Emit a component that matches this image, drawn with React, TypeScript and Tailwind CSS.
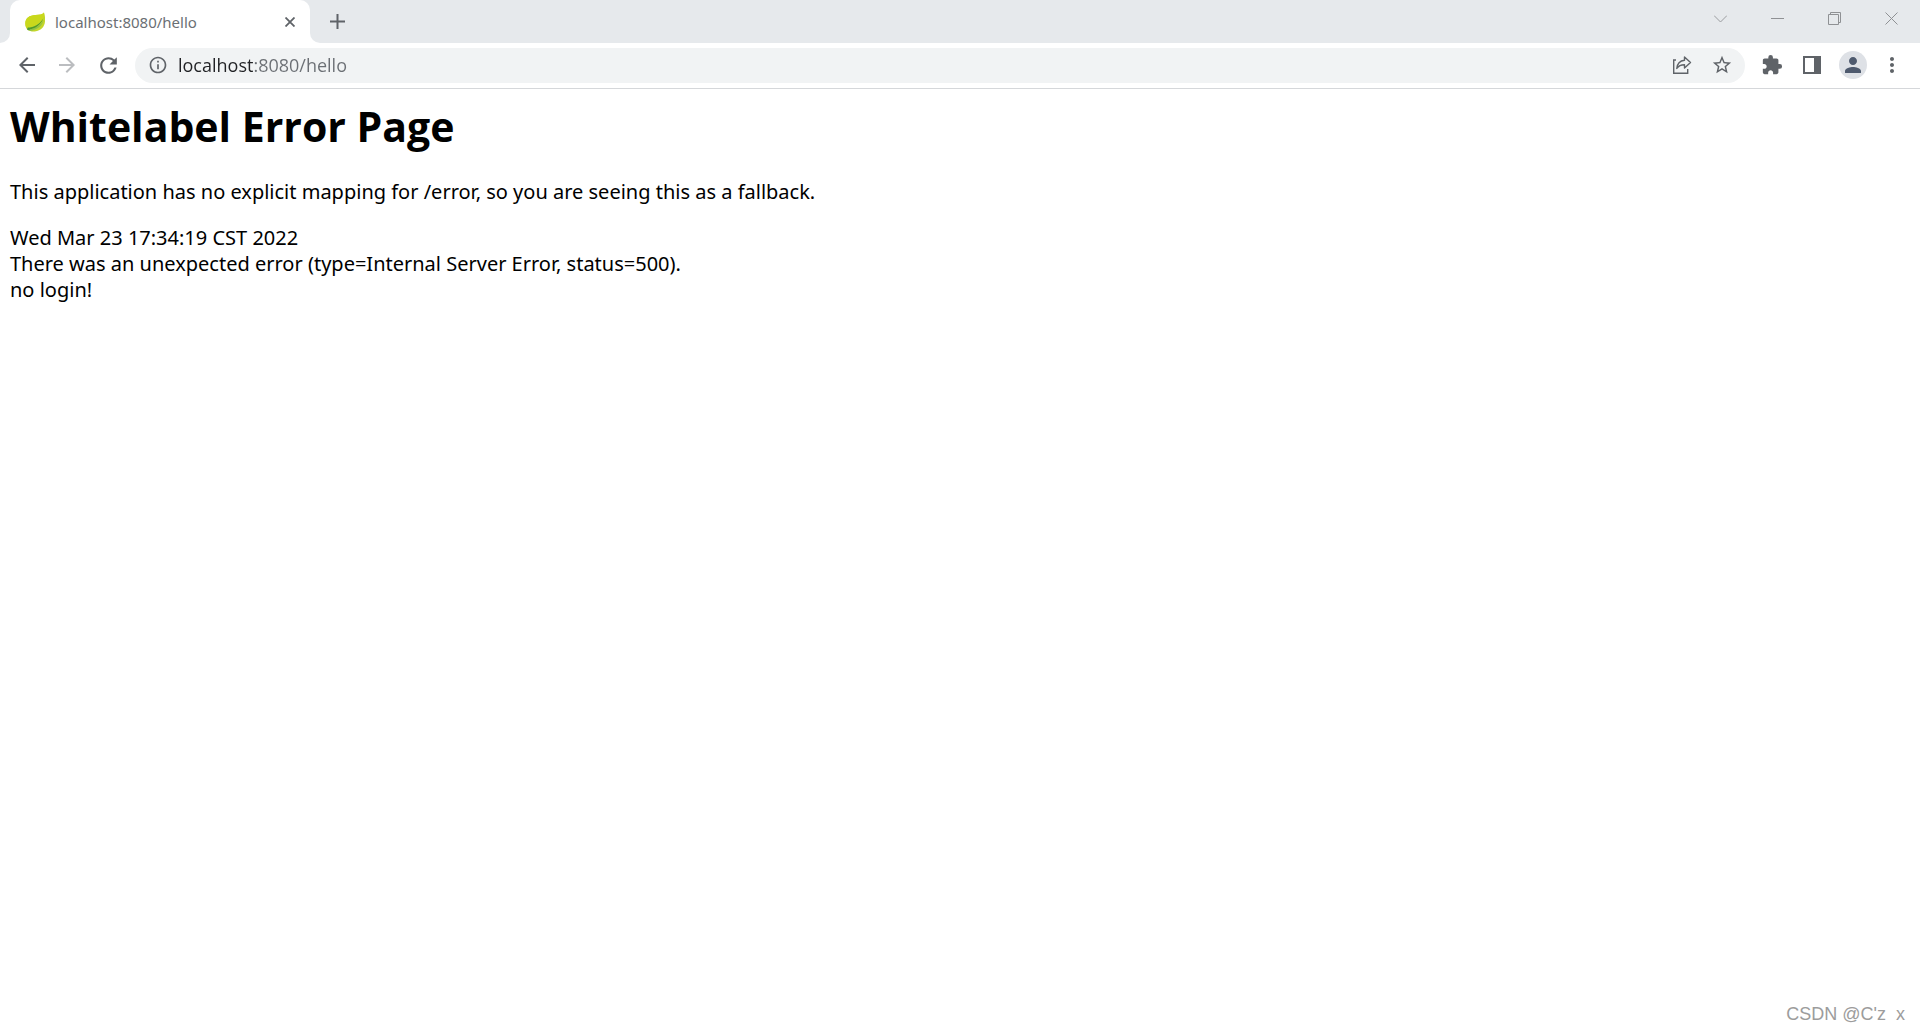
import type { ReactNode } from "react";
import {
  MdArrowBack,
  MdArrowForward,
  MdExtension,
  MdMoreVert,
  MdOutlineInfo,
  MdPerson,
  MdRefresh,
  MdStarBorder,
} from "react-icons/md";

function IconButton({ label, className = "", children }: { label: string; className?: string; children: ReactNode }) {
  return (
    <button type="button" aria-label={label} className={`flex h-7 shrink-0 items-center justify-center rounded-full ${className}`}>
      {children}
    </button>
  );
}

function LeafIcon() {
  return (
    <svg viewBox="0 0 20 20" className="h-5 w-5 shrink-0" aria-hidden="true">
      <path d="M19 .5C17.500 2.500 14.500 2.800 10.500 3C4.500 3.300.500 6 .300 11c-.1 3 .7 5 2.200 6.700C5 19.500 8 19.700 11 19.200c5-.8 8.600-4.500 9-9.700C20.200 6 20 3 19 .5z" fill="#c3d62a" />
      <path d="M19 .5C17.500 2.500 14.500 2.800 10.500 3C4.500 3.300.500 6 .300 11c0 1.500.2 3 .8 4.200C9 14.500 15 12 18.500 5.500z" fill="#c9d81c" />
      <path d="M2 17c7 .3 13.500-2.500 16.800-9.500C17.500 14 11 18.600 5 18.800z" fill="#8cc04a" />
      <path d="M2.500 15.800C9 15.500 14.500 12.500 18.300 6.500C15.500 13.500 10 16.800 4.500 17.200z" fill="#4f9a2c" />
      <circle cx="3.500" cy="17" r="1.300" fill="#4c9a3a" />
    </svg>
  );
}

function TabStrip() {
  return (
    <header className="flex h-[43px] bg-[#e6e9ec]">
      <div className="w-[10px] bg-white">
        <div className="h-full rounded-br-[10px] bg-[#e6e9ec]" />
      </div>
      <div className="bg-[#e6e9ec]">
        <div className="flex h-full w-[300px] items-center rounded-t-[10px] bg-white pr-3 pl-[15px]">
          <LeafIcon />
          <span className="ml-[10px] flex-1 pt-[2px] text-[15px] text-[#6b6f74]">localhost:8080/hello</span>
          <button type="button" aria-label="Close tab" className="flex h-4 w-4 items-center justify-center">
            <svg viewBox="0 0 10 10" className="h-[10px] w-[10px]" stroke="#5f6368" strokeWidth="1.800" aria-hidden="true">
              <path d="M.5.5l9 9M9.500.5l-9 9" />
            </svg>
          </button>
        </div>
      </div>
      <div className="flex-1 bg-white">
        <div className="flex h-full items-start rounded-bl-[10px] bg-[#e6e9ec] pl-[20px]">
          <button type="button" aria-label="New tab" className="mt-[14px] flex h-[15px] w-[15px]">
            <svg viewBox="0 0 15 15" className="h-[15px] w-[15px]" stroke="#5f6368" strokeWidth="2" aria-hidden="true">
              <path d="M7.500 0v15M0 7.500h15" />
            </svg>
          </button>
          <div className="mt-3 ml-auto flex gap-11 pr-[22px]">
            <button type="button" aria-label="Search tabs">
              <svg viewBox="0 0 13 13" className="h-[13px] w-[13px]" fill="none" stroke="#9a9c9f" aria-hidden="true">
                <path d="M0 3.500l6.500 6.500 6.500-6.500" />
              </svg>
            </button>
            <button type="button" aria-label="Minimize">
              <svg viewBox="0 0 13 13" className="h-[13px] w-[13px]" stroke="#8f9194" aria-hidden="true">
                <path d="M0 6.500h13" />
              </svg>
            </button>
            <button type="button" aria-label="Restore">
              <svg viewBox="0 0 13 13" className="h-[13px] w-[13px]" fill="none" stroke="#8f9194" aria-hidden="true">
                <path d="M.5 2.500h10v10H.5zM2.500 2.500v-2h10v10h-2" />
              </svg>
            </button>
            <button type="button" aria-label="Close window">
              <svg viewBox="0 0 13 13" className="h-[13px] w-[13px]" stroke="#8f9194" aria-hidden="true">
                <path d="M.5.5l12 12M12.500.5l-12 12" />
              </svg>
            </button>
          </div>
        </div>
      </div>
    </header>
  );
}

function Toolbar() {
  return (
    <nav className="flex h-[46px] items-center border-b border-[#d5d7da] bg-white pr-4 pb-px pl-[15px] text-[#5f6368]">
      <div className="flex gap-4">
        <IconButton label="Back" className="w-6"><MdArrowBack size={24} /></IconButton>
        <IconButton label="Forward" className="w-6 text-[#bbbdc0]"><MdArrowForward size={24} /></IconButton>
        <IconButton label="Reload" className="w-[26px]"><MdRefresh size={25} /></IconButton>
      </div>
      <div className="ml-[14px] flex h-[35px] flex-1 items-center rounded-full bg-[#f1f3f4] pr-3 pl-3">
        <IconButton label="View site information" className="w-[22px]"><MdOutlineInfo size={20} /></IconButton>
        <input
          type="text"
          aria-label="Address"
          defaultValue="localhost:8080/hello"
          className="ml-[9px] h-7 flex-1 bg-[linear-gradient(to_right,#202124_76px,#6b6f74_76px)] bg-clip-text font-['Open_Sans',sans-serif] text-[18px] text-transparent outline-none"
        />
        <IconButton label="Share" className="w-[22px]">
          <svg viewBox="0 0 20 20" className="h-5 w-5" fill="none" stroke="#5f6368" strokeWidth="1.400" aria-hidden="true">
            <path d="M4 5H1.700v13.300h14V14" />
            <path d="M12.500 2l6 5.500-6 5.500v-3.300C9 9.700 6.500 10.800 4.800 13.500C5.200 9 8 5.700 12.500 5.200z" strokeLinejoin="round" />
          </svg>
        </IconButton>
        <IconButton label="Bookmark this tab" className="ml-[18px] w-[22px]"><MdStarBorder size={22} /></IconButton>
      </div>
      <div className="ml-[15px] flex items-center">
        <IconButton label="Extensions" className="w-6"><MdExtension size={22} /></IconButton>
        <IconButton label="Side panel" className="ml-4 w-6">
          <svg viewBox="0 0 18 18" className="h-[18px] w-[18px]" aria-hidden="true">
            <path d="M0 0h18v18H0zM2 2v14h9V2z" fill="#5f6368" fillRule="evenodd" />
          </svg>
        </IconButton>
        <IconButton label="Profile" className="ml-[15px] w-7 bg-[#dee1e6] text-[#4e5a6e]"><MdPerson size={24} /></IconButton>
        <IconButton label="Menu" className="ml-[13px] w-6"><MdMoreVert size={24} /></IconButton>
      </div>
    </nav>
  );
}

export default function App() {
  return (
    <div className="flex min-h-screen flex-col bg-white font-['Noto_Sans',sans-serif]">
      <TabStrip />
      <Toolbar />
      <main className="flex-1 px-[10px] pt-[10px] text-[20px] leading-[26px] text-black">
        <h1 className="font-['Open_Sans',sans-serif] text-[41px] leading-[54px] font-bold">Whitelabel Error Page</h1>
        <p className="mt-[26px]">This application has no explicit mapping for /error, so you are seeing this as a fallback.</p>
        <div className="mt-5">Wed Mar 23 17:34:19 CST 2022</div>
        <div>There was an unexpected error (type=Internal Server Error, status=500).</div>
        <div>no login!</div>
      </main>
      <footer className="pr-[15px] pb-[3px] text-right font-['Liberation_Sans',sans-serif] text-[18px] leading-[26px] whitespace-pre text-[#9c9c9c]">
        {"CSDN @C'z  x"}
      </footer>
    </div>
  );
}
